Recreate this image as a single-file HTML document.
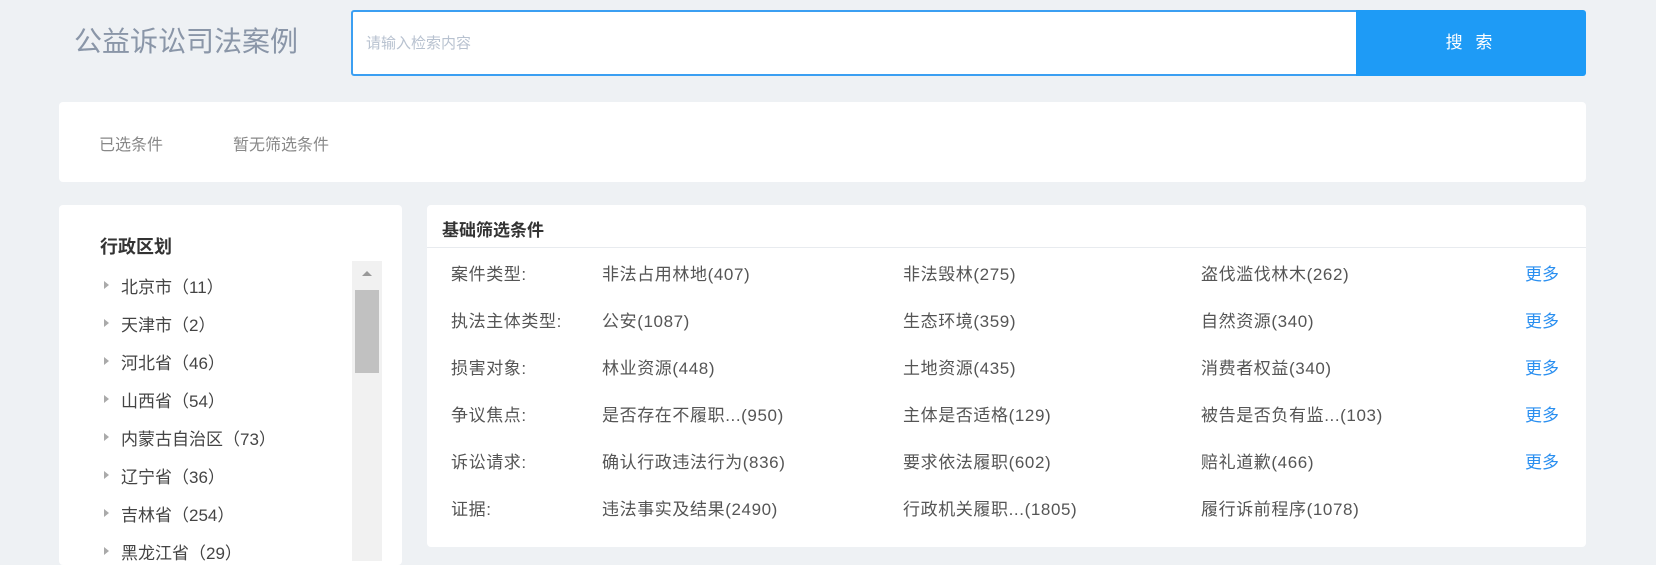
<!DOCTYPE html>
<html><head><meta charset="utf-8"><style>
*{margin:0;padding:0;box-sizing:border-box}
body{width:1656px;height:557px;overflow:hidden;background:#eef1f4;font-family:"Liberation Sans","Noto Sans CJK SC",sans-serif;position:relative;color:#555}
.a{position:absolute;white-space:nowrap}
.title{left:74px;top:25px;font-size:28px;color:#8a96a8;line-height:34px}
.search{left:351px;top:10px;width:1007px;height:66px;border:2px solid #3b9ff2;background:#fff;border-radius:3px 0 0 3px}
.search span{position:absolute;left:13px;top:20px;font-size:15px;color:#b8c2d0}
.btn{left:1356px;top:10px;width:230px;height:66px;background:#1e9bf6;color:#fff;font-size:17px;text-align:center;line-height:66px;border-radius:0 3px 3px 0;letter-spacing:4px}
.box{background:#fff;border-radius:4px}
.cond{left:59px;top:102px;width:1527px;height:80px}
.g{font-size:16px;color:#888}
.left{left:59px;top:205px;width:343px;height:360px}
.right{left:427px;top:205px;width:1159px;height:342px}
.li{font-size:17px;color:#444;left:121px}
.tri{left:104px;width:0;height:0;border-left:5px solid #aaa;border-top:4px solid transparent;border-bottom:4px solid transparent}
.r{font-size:17px;color:#555;letter-spacing:0.6px}
.m{font-size:17px;color:#2a8ff0}
</style></head><body>
<div class="a title">公益诉讼司法案例</div>
<div class="a search"><span>请输入检索内容</span></div>
<div class="a btn">搜 索</div>
<div class="a box cond"></div>
<div class="a g" style="left:99px;top:131px">已选条件</div>
<div class="a g" style="left:233px;top:131px">暂无筛选条件</div>
<div class="a box left"></div>
<div class="a" style="left:100px;top:233px;font-size:18px;font-weight:bold;color:#333">行政区划</div>
<div class="a" style="left:352px;top:261px;width:30px;height:300px;background:#f1f1f1"></div>
<div class="a" style="left:362px;top:271px;width:0;height:0;border-bottom:5px solid #999;border-left:5px solid transparent;border-right:5px solid transparent"></div>
<div class="a" style="left:355px;top:290px;width:24px;height:83px;background:#c1c1c1"></div>
<div class="a li" style="top:273px">北京市（11）</div><div class="a tri" style="top:281px"></div>
<div class="a li" style="top:311px">天津市（2）</div><div class="a tri" style="top:319px"></div>
<div class="a li" style="top:349px">河北省（46）</div><div class="a tri" style="top:357px"></div>
<div class="a li" style="top:387px">山西省（54）</div><div class="a tri" style="top:395px"></div>
<div class="a li" style="top:425px">内蒙古自治区（73）</div><div class="a tri" style="top:433px"></div>
<div class="a li" style="top:463px">辽宁省（36）</div><div class="a tri" style="top:471px"></div>
<div class="a li" style="top:501px">吉林省（254）</div><div class="a tri" style="top:509px"></div>
<div class="a li" style="top:539px">黑龙江省（29）</div><div class="a tri" style="top:547px"></div>
<div class="a box right"></div>
<div class="a" style="left:442px;top:216px;font-size:17px;font-weight:bold;color:#333">基础筛选条件</div>
<div class="a" style="left:427px;top:247px;width:1159px;height:1px;background:#e8ebef"></div>

<div class="a r" style="left:451px;top:260px">案件类型:</div><div class="a r" style="left:602px;top:260px">非法占用林地(407)</div><div class="a r" style="left:903px;top:260px">非法毁林(275)</div><div class="a r" style="left:1201px;top:260px">盗伐滥伐林木(262)</div><div class="a m" style="left:1525px;top:260px">更多</div>
<div class="a r" style="left:451px;top:307px">执法主体类型:</div><div class="a r" style="left:602px;top:307px">公安(1087)</div><div class="a r" style="left:903px;top:307px">生态环境(359)</div><div class="a r" style="left:1201px;top:307px">自然资源(340)</div><div class="a m" style="left:1525px;top:307px">更多</div>
<div class="a r" style="left:451px;top:354px">损害对象:</div><div class="a r" style="left:602px;top:354px">林业资源(448)</div><div class="a r" style="left:903px;top:354px">土地资源(435)</div><div class="a r" style="left:1201px;top:354px">消费者权益(340)</div><div class="a m" style="left:1525px;top:354px">更多</div>
<div class="a r" style="left:451px;top:401px">争议焦点:</div><div class="a r" style="left:602px;top:401px">是否存在不履职...(950)</div><div class="a r" style="left:903px;top:401px">主体是否适格(129)</div><div class="a r" style="left:1201px;top:401px">被告是否负有监...(103)</div><div class="a m" style="left:1525px;top:401px">更多</div>
<div class="a r" style="left:451px;top:448px">诉讼请求:</div><div class="a r" style="left:602px;top:448px">确认行政违法行为(836)</div><div class="a r" style="left:903px;top:448px">要求依法履职(602)</div><div class="a r" style="left:1201px;top:448px">赔礼道歉(466)</div><div class="a m" style="left:1525px;top:448px">更多</div>
<div class="a r" style="left:451px;top:495px">证据:</div><div class="a r" style="left:602px;top:495px">违法事实及结果(2490)</div><div class="a r" style="left:903px;top:495px">行政机关履职...(1805)</div><div class="a r" style="left:1201px;top:495px">履行诉前程序(1078)</div>
</body></html>
